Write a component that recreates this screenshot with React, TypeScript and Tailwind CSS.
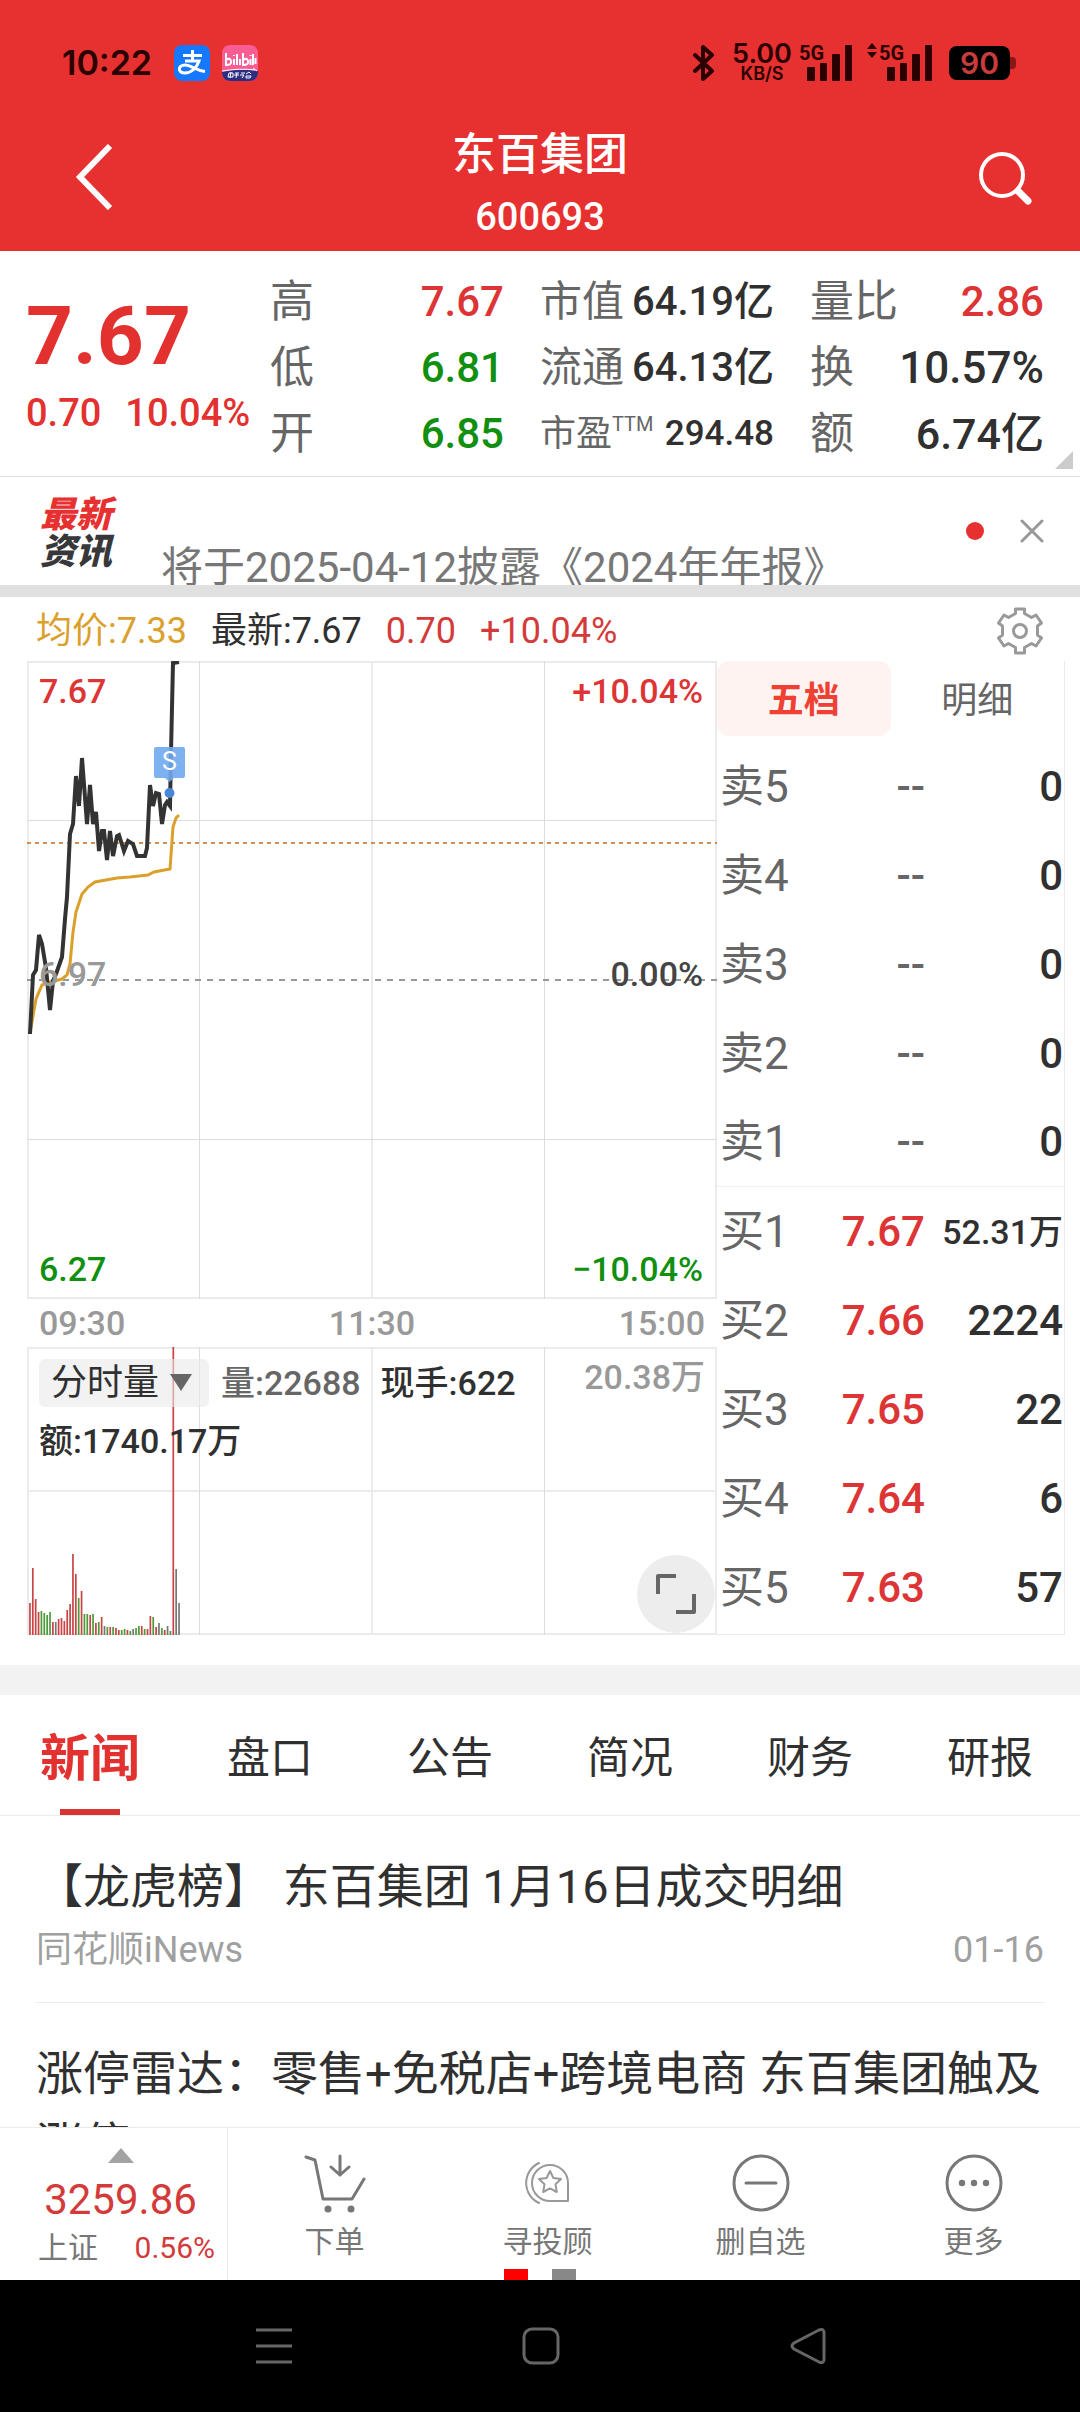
import type { ReactNode } from 'react'

type Tone = 'up' | 'down' | 'flat'

const toneText: Record<Tone, string> = {
    up: 'text-[#dd3535]',
    down: 'text-[#108f10]',
    flat: 'text-[#303030]',
}

const quotes: { label: string; sup?: string; value: string; tone: Tone; size: string; labelSize: string }[] = [
    { label: '高', value: '7.67', tone: 'up', size: 'text-[42px]', labelSize: 'text-[44px]' },
    { label: '市值', value: '64.19亿', tone: 'flat', size: 'text-[40px]', labelSize: 'text-[42px]' },
    { label: '量比', value: '2.86', tone: 'up', size: 'text-[42px]', labelSize: 'text-[44px]' },
    { label: '低', value: '6.81', tone: 'down', size: 'text-[42px]', labelSize: 'text-[44px]' },
    { label: '流通', value: '64.13亿', tone: 'flat', size: 'text-[40px]', labelSize: 'text-[42px]' },
    { label: '换', value: '10.57%', tone: 'flat', size: 'text-[44px]', labelSize: 'text-[44px]' },
    { label: '开', value: '6.85', tone: 'down', size: 'text-[42px]', labelSize: 'text-[44px]' },
    { label: '市盈', sup: 'TTM', value: '294.48', tone: 'flat', size: 'text-[35px]', labelSize: 'text-[36px]' },
    { label: '额', value: '6.74亿', tone: 'flat', size: 'text-[43px]', labelSize: 'text-[44px]' },
]

const sells = ['卖5', '卖4', '卖3', '卖2', '卖1']

const buys = [
    { label: '买1', price: '7.67', amount: '52.31万', size: 'text-[34px]' },
    { label: '买2', price: '7.66', amount: '2224', size: 'text-[42px]' },
    { label: '买3', price: '7.65', amount: '22', size: 'text-[42px]' },
    { label: '买4', price: '7.64', amount: '6', size: 'text-[42px]' },
    { label: '买5', price: '7.63', amount: '57', size: 'text-[42px]' },
]

const tabs = ['新闻', '盘口', '公告', '简况', '财务', '研报']

const pricePoints =
    '30,1034 33,975 36,970 39,935 42,944 46,968 50,1010 53,981 56,974 62,957 65,919 67,897 70,834 73,824 76,776 79,806 82,758 87,824 90,785 93,824 96,812 99,851 102,831 104,831 107,860 110,831 113,856 117,836 119,835 124,851 128,841 133,844 137,856 145,856 147,848 150,785 153,806 156,793 159,794 162,824 165,805 167,802 170,806 171,752 173,663 179,662'

const averagePoints =
    '30,1033 36,999 42,985 50,982 62,979 67,975 70,964 73,932 76,912 82,894 88,887 95,882 117,878 130,877 148,875 154,872 170,869 173,827 176,818 179,815'

// height and colour of each minute's volume
const volumes: [number, string][] = [
    [32, 'r'], [67, 'r'], [36, 'r'], [23, 'r'], [24, 'g'], [22, 'g'], [20, 'g'], [23, 'g'], [13, 'r'], [13, 'k'],
    [16, 'r'], [17, 'r'], [14, 'r'], [25, 'r'], [31, 'r'], [81, 'r'], [61, 'r'], [37, 'g'], [44, 'r'], [21, 'g'],
    [21, 'g'], [20, 'r'], [21, 'g'], [12, 'r'], [13, 'g'], [18, 'r'], [9, 'k'], [8, 'g'], [8, 'r'], [8, 'g'],
    [7, 'r'], [5, 'r'], [5, 'g'], [6, 'g'], [5, 'r'], [4, 'g'], [6, 'k'], [7, 'g'], [9, 'g'], [9, 'r'],
    [6, 'g'], [6, 'r'], [19, 'r'], [18, 'g'], [8, 'r'], [12, 'k'], [7, 'g'], [5, 'r'], [9, 'k'], [4, 'g'],
    [288, 'r'], [66, 'k'], [32, 'k'],
]

const volumeFill: Record<string, string> = { r: '#c94444', g: '#4d9a3a', k: '#777777' }

function SignalBars() {
    return (
        <svg width="46" height="36" viewBox="0 0 46 36" fill="currentColor" aria-hidden="true">
            <rect x="0" y="22" width="8" height="14" rx="1" />
            <rect x="13" y="18" width="7" height="18" rx="1" />
            <rect x="25" y="9" width="8" height="27" rx="1" />
            <rect x="38" y="0" width="7" height="36" rx="1" />
        </svg>
    )
}

function StatusBar() {
    return (
        <div className="flex h-[82px] items-center justify-between pt-11 pr-16 pl-[62px] text-[#2a0000]">
            <div className="flex items-center">
                <span className="w-28 font-['Inter',sans-serif] text-[34px] leading-9 font-semibold">10:22</span>
                <span className="flex size-9 items-center justify-center rounded-lg bg-[#1677ff]">
                    <svg width="28" height="26" viewBox="0 0 28 26" fill="none" stroke="#fff" strokeWidth="3" aria-hidden="true">
                        <path d="M5 5.500h19M14.500 0v11M7 11h14c-2 6-7 12-14 12-8 0-7-8 0-8 6 0 10 5 20 6.500" />
                    </svg>
                </span>
                <span className="ml-3 flex size-9 flex-col overflow-hidden rounded-lg bg-[#fb5c92]">
                    <svg width="36" height="36" viewBox="0 0 36 36" aria-hidden="true">
                        <path d="M0 27q18-4 36-1v10H0z" fill="#2d2f83" />
                        <path d="M0 26q18-3 33-1M31 23l4 3" stroke="#fff" fill="none" />
                        <g fill="none" stroke="#fff" strokeWidth="2">
                            <path d="M4 8v12q6 0 5-4t-5-1M12 14v6M12 10v1M15 9v11M18 14v6M21 8v12q6 0 5-4t-5-1M28.500 14v6M28.500 10v1M31 9v11M33.500 13v6" />
                        </g>
                        <path d="M7 28h4v4h-5zM9 27l-1 6M13 28h4M12 30h5M15 28l-1 5M19 28h4M18 30h4l-2 3M24 29l3-2 2 2M24 31h5l-1 2h-4z" stroke="#fff" fill="none" />
                    </svg>
                </span>
            </div>
            <div className="flex items-center">
                <svg width="22" height="36" viewBox="0 0 22 36" fill="none" stroke="currentColor" strokeWidth="4" strokeLinejoin="round" strokeLinecap="round" aria-hidden="true">
                    <path d="M2 10l17 16-9 8V2l9 8L2 26" />
                </svg>
                <span className="ml-4 flex w-[62px] flex-col items-center font-['Inter',sans-serif] font-semibold">
                    <span className="text-[27px] leading-[22px]">5.00</span>
                    <span className="text-[18px] leading-[18px]">KB/S</span>
                </span>
                <span className="relative ml-3.5">
                    <SignalBars />
                    <span className="absolute -top-1 -left-2 text-[20px] leading-6 font-bold">5G</span>
                </span>
                <svg width="10" height="16" viewBox="0 0 10 16" fill="currentColor" className="mr-2.5 ml-3.5 self-start" aria-hidden="true">
                    <path d="M5 0l5 6H0zM5 15l5-6H0z" />
                </svg>
                <span className="relative">
                    <SignalBars />
                    <span className="absolute -top-1 -left-2 text-[20px] leading-6 font-bold">5G</span>
                </span>
                <span className="ml-4 flex h-[34px] w-[61px] items-center justify-center rounded-lg bg-black font-['Inter',sans-serif] text-[30px] leading-8 font-semibold text-[#c83c3c]">
                    90
                </span>
                <span className="h-3 w-1.5 rounded-r bg-[#8a1616]" />
            </div>
        </div>
    )
}

function Header() {
    return (
        <header className="bg-[#e73030]">
            <StatusBar />
            <div className="flex pt-[42px] pb-[3px] text-white">
                <div className="flex-1">
                    <button type="button" aria-label="返回" className="flex h-[105px] items-center pl-[74px]">
                        <svg width="40" height="66" viewBox="0 0 40 66" fill="none" stroke="currentColor" strokeWidth="6">
                            <path d="M36 2L6 33l30 31" />
                        </svg>
                    </button>
                </div>
                <div className="text-center font-medium">
                    <h1 className="text-[44px] leading-[62px]">东百集团</h1>
                    <p className="text-[38px] leading-[62px]">600693</p>
                </div>
                <div className="flex flex-1 justify-end">
                    <button type="button" aria-label="搜索" className="flex h-[108px] items-center pr-12">
                        <svg width="54" height="54" viewBox="0 0 54 54" fill="none" stroke="currentColor" strokeLinecap="round">
                            <circle cx="24" cy="24" r="21" strokeWidth="4" />
                            <path d="M40 40l10 10" strokeWidth="7" />
                        </svg>
                    </button>
                </div>
            </div>
        </header>
    )
}

function QuotePanel() {
    return (
        <section className="relative flex border-b border-[#ddd] pt-[18px] pr-9 pb-[9px] pl-[26px]">
            <div className="w-[244px] shrink-0 pt-3 text-[#e3312f]">
                <p className="text-[82px] leading-[110px] font-bold">7.67</p>
                <p className="flex gap-6 text-[38px] leading-11 font-medium whitespace-nowrap">
                    <span>0.70</span>
                    <span>10.04%</span>
                </p>
            </div>
            <dl className="grid flex-1 grid-cols-3 gap-x-9">
                {quotes.map((q) => (
                    <div key={q.label} className="flex h-[66px] items-center justify-between leading-[66px] whitespace-nowrap">
                        <dt className={`flex text-[#666] ${q.labelSize}`}>
                            {q.label}
                            {q.sup && <span className="text-[20px] leading-[46px]">{q.sup}</span>}
                        </dt>
                        <dd className={`font-medium ${q.size} ${toneText[q.tone]}`}>{q.value}</dd>
                    </div>
                ))}
            </dl>
            <svg width="18" height="18" viewBox="0 0 18 18" className="absolute right-[7px] bottom-[7px]" aria-hidden="true">
                <path d="M18 0v18H0z" fill="#ccc" />
            </svg>
        </section>
    )
}

function Ticker() {
    return (
        <section className="flex h-[108px] justify-between overflow-hidden pr-9 pl-10">
            <div className="flex">
                <p className="w-[121px] pt-5 text-[36px] leading-[37px] font-black text-[#38383a] italic">
                    <span className="block text-[#e73030]">最新</span>
                    资讯
                </p>
                <a href="#notice" className="pt-[70px] text-[42px] leading-[42px] whitespace-nowrap text-[#777]">
                    将于2025-04-12披露《2024年年报》
                </a>
            </div>
            <div className="flex items-center gap-9">
                <span className="size-[18px] rounded-full bg-[#e73030]" />
                <button type="button" aria-label="关闭">
                    <svg width="24" height="24" viewBox="0 0 24 24" stroke="#999" strokeWidth="3" strokeLinecap="round">
                        <path d="M2 2l20 20M22 2L2 22" />
                    </svg>
                </button>
            </div>
        </section>
    )
}

function ChartSummary() {
    return (
        <div className="flex h-16 items-center justify-between px-9 pt-1 text-[36px] leading-10">
            <div className="flex gap-6 text-[#d33b3b]">
                <span className="text-[#dba02c]">均价:7.33</span>
                <span className="text-[#303030]">最新:7.67</span>
                <span>0.70</span>
                <span>+10.04%</span>
            </div>
            <button type="button" aria-label="设置">
                <svg width="48" height="48" viewBox="0 0 48 48" fill="none" stroke="#999" strokeWidth="3" strokeLinejoin="round">
                    <path d="M19.500 2h9v4.500l7 4 4.500-2.500 5.500 8-4 3v9l4 3-5.500 8-4.500-2.500-7 4V46h-9v-5.500l-7-4L8 39l-5.500-8 4-3v-9l-4-3L8 8l4.500 2.500 7-4z" />
                    <circle cx="24" cy="24" r="6.500" />
                </svg>
            </button>
        </div>
    )
}

function PriceChart() {
    return (
        <div className="relative h-[638px] text-[34px] leading-10 font-medium">
            <svg className="block size-full" viewBox="27 661 690 638" preserveAspectRatio="none" aria-hidden="true">
                <g stroke="#ebebeb" strokeWidth="2" fill="none">
                    <path d="M28 662h688v636H28zM372 662v636" />
                </g>
                <path d="M199.500 661v638M544.500 661v638M28 820.500h688M28 1139.500h688" stroke="#dcdcdc" />
                <path d="M27 843h690" stroke="#cf8f50" strokeWidth="2" strokeDasharray="4 4" />
                <path d="M27 980h690" stroke="#999" strokeWidth="2" strokeDasharray="6 6" />
                <polyline points={averagePoints} fill="none" stroke="#dba02c" strokeWidth="3" />
                <polyline points={pricePoints} fill="none" stroke="#333" strokeWidth="4" />
                <path d="M156 747h27q2 0 2 2v27q0 2-2 2h-9l-4.500 4-4.500-4h-9q-2 0-2-2v-27q0-2 2-2z" fill="#6fa8ee" fillOpacity="0.9" />
                <circle cx="169.500" cy="793" r="5" fill="#4a86d8" />
                <text x="169.500" y="770" textAnchor="middle" fontSize="25" fontWeight="400" fill="#fff">S</text>
            </svg>
            <span className="absolute top-2.5 left-3 text-[#dd3535]">7.67</span>
            <span className="absolute top-[293px] left-3 text-[#999]">6.97</span>
            <span className="absolute bottom-2.5 left-3 text-[#108f10]">6.27</span>
            <span className="absolute top-2.5 right-3.5 text-[#dd3535]">+10.04%</span>
            <span className="absolute top-[293px] right-3.5 text-[#444]">0.00%</span>
            <span className="absolute right-3.5 bottom-2.5 text-[#108f10]">−10.04%</span>
        </div>
    )
}

function VolumeChart() {
    return (
        <div className="relative h-72 text-[34px] leading-10 font-medium">
            <svg className="block size-full" viewBox="27 1347 690 288" preserveAspectRatio="none" aria-hidden="true">
                <path d="M28 1348h688v286H28zM372 1348v286M28 1491h688" stroke="#ebebeb" strokeWidth="2" fill="none" />
                <path d="M199.500 1347v288M544.500 1347v288" stroke="#dcdcdc" />
                {volumes.map(([height, kind], i) => (
                    <rect key={i} x={29.1 + i * 2.867} y={1635 - height} width="1.700" height={height} fill={volumeFill[kind]} />
                ))}
            </svg>
            <div className="absolute top-3 right-3 left-3 text-[#303030]">
                <div className="flex items-center whitespace-nowrap">
                    <button type="button" className="flex h-12 w-[170px] items-center justify-between rounded-md bg-[#eaeaea]/60 pr-4 pl-3 text-[36px]">
                        <span className="font-normal">分时量</span>
                        <svg width="24" height="18" viewBox="0 0 24 18" aria-hidden="true">
                            <path d="M1 0h22L12 17z" fill="#666" />
                        </svg>
                    </button>
                    <span className="ml-3 text-[#666]">量:22688</span>
                    <span className="ml-5">现手:622</span>
                    <span className="-mt-3 ml-auto text-[#999]">20.38万</span>
                </div>
                <p className="mt-3.5">额:1740.17万</p>
            </div>
            <button type="button" aria-label="全屏" className="absolute right-0.5 bottom-0.5 flex size-[78px] items-center justify-center rounded-full bg-[#ededed]">
                <svg width="42" height="42" viewBox="0 0 42 42" fill="none" stroke="#666" strokeWidth="4" strokeLinejoin="round">
                    <path d="M3 21V3h18M39 21v18H21" />
                </svg>
            </button>
        </div>
    )
}

function OrderRow({ label, price, amount, size, priceClass }: { label: string; price: string; amount: string; size: string; priceClass: string }) {
    return (
        <tr className="h-[89px]">
            <th scope="row" className="w-[103px] pt-0.5 pl-[3px] text-left text-[44px] font-normal text-[#666]">{label}</th>
            <td className={`w-[105px] pt-0.5 text-right text-[42px] font-medium ${priceClass}`}>{price}</td>
            <td className={`pt-0.5 pr-px text-right font-medium text-[#303030] ${size}`}>{amount}</td>
        </tr>
    )
}

function OrderBook() {
    return (
        <div className="w-[348px] shrink-0 border-r border-b border-[#ebebeb]">
            <div role="tablist" className="grid h-20 grid-cols-2 items-start text-[36px]">
                <button type="button" role="tab" aria-selected="true" className="h-[75px] rounded-xl bg-[#fff3f2] pt-1 font-bold text-[#f04034]">五档</button>
                <button type="button" role="tab" aria-selected="false" className="h-[75px] pt-1 text-[#666]">明细</button>
            </div>
            <table className="w-full border-collapse leading-[60px]">
                <tbody>
                    {sells.map((label) => (
                        <OrderRow key={label} label={label} price="--" amount="0" size="text-[42px]" priceClass="text-[#666]" />
                    ))}
                </tbody>
                <tbody className="border-t border-[#f0f0f0]">
                    {buys.map((row) => (
                        <OrderRow key={row.label} {...row} priceClass="text-[#dd3535]" />
                    ))}
                </tbody>
            </table>
        </div>
    )
}

function ChartSection() {
    return (
        <section>
            <ChartSummary />
            <div className="flex pr-[15px] pl-[27px]">
                <div className="min-w-0 flex-1">
                    <PriceChart />
                    <div className="flex h-12 items-center justify-between px-3 text-[34px] font-medium text-[#999]">
                        <span>09:30</span>
                        <span>11:30</span>
                        <span>15:00</span>
                    </div>
                    <VolumeChart />
                </div>
                <OrderBook />
            </div>
        </section>
    )
}

function NewsSection() {
    return (
        <section>
            <nav className="grid h-[121px] grid-cols-6 border-b border-[#ebebeb]">
                {tabs.map((tab, i) => (
                    <a
                        key={tab}
                        href="#news"
                        className={
                            i === 0
                                ? 'flex flex-col items-center justify-between pt-8 text-[50px] leading-[64px] font-bold text-[#e3312f]'
                                : 'flex flex-col items-center pt-8 text-[43px] leading-[62px] text-[#303030]'
                        }
                    >
                        {tab}
                        {i === 0 && <span className="h-1.5 w-[60px] bg-[#d93434]" />}
                    </a>
                ))}
            </nav>
            <div className="h-[311px] overflow-hidden px-9">
                <article className="h-[187px] border-b border-[#ebebeb] pt-[35px]">
                    <h2 className="text-[47px] leading-[71px] text-[#303030]">【龙虎榜】 东百集团 1月16日成交明细</h2>
                    <p className="flex justify-between text-[36px] leading-14 text-[#a0a0a0]">
                        <span>同花顺iNews</span>
                        <time>01-16</time>
                    </p>
                </article>
                <article className="pt-[35px]">
                    <h2 className="text-[47px] leading-[71px] text-[#303030]">涨停雷达：零售+免税店+跨境电商 东百集团触及涨停</h2>
                </article>
            </div>
        </section>
    )
}

function ToolButton({ label, children }: { label: string; children: ReactNode }) {
    return (
        <button type="button" className="flex flex-1 flex-col items-center pt-6 text-[30px] leading-10 text-[#777]">
            <svg width="62" height="62" viewBox="0 0 62 62" fill="none" stroke="currentColor" strokeWidth="3" strokeLinecap="round" strokeLinejoin="round">
                {children}
            </svg>
            <span className="mt-2">{label}</span>
        </button>
    )
}

function BottomBar() {
    return (
        <footer className="relative flex h-[153px] border-t border-[#ebebeb] bg-white">
            <div className="flex w-[228px] flex-col items-center border-r border-[#ebebeb] pt-5">
                <svg width="26" height="15" viewBox="0 0 26 15" className="ml-3.5" aria-hidden="true">
                    <path d="M13 0l13 15H0z" fill="#a3a3a3" />
                </svg>
                <span className="mt-3 pl-3.5 text-[42px] leading-[50px] text-[#d33b3b]">3259.86</span>
                <p className="flex w-full justify-between pr-3 pl-[38px] text-[30px] leading-[46px]">
                    <span className="text-[#777]">上证</span>
                    <span className="text-[#d33b3b]">0.56%</span>
                </p>
            </div>
            <ToolButton label="下单">
                <path d="M2 5l9 3 8 39h29l12-20M36 4v19M27 15l9 8 9-8" />
                <g fill="currentColor" stroke="none">
                    <circle cx="24" cy="57" r="3.500" />
                    <circle cx="47" cy="57" r="3.500" />
                </g>
            </ToolButton>
            <ToolButton label="寻投顾">
                <g strokeWidth="2" stroke="#999">
                    <path d="M51 49V31a18 18 0 1 0-18 18z" />
                    <path d="M22 11a22 22 0 0 0 0 40" />
                    <path d="M33 19l3.400 7 7.600 1-5.500 5.300 1.300 7.700L33 36.400 26.200 40l1.300-7.700L22 27l7.600-1z" />
                </g>
            </ToolButton>
            <ToolButton label="删自选">
                <circle cx="31" cy="31" r="27" />
                <path d="M16 31h30" />
            </ToolButton>
            <ToolButton label="更多">
                <circle cx="31" cy="31" r="27" />
                <g fill="currentColor" stroke="none">
                    <circle cx="19" cy="31" r="3.200" />
                    <circle cx="31" cy="31" r="3.200" />
                    <circle cx="43" cy="31" r="3.200" />
                </g>
            </ToolButton>
            <div className="absolute inset-x-0 bottom-0 flex justify-center gap-6">
                <span className="h-[11px] w-6 bg-[#f00]" />
                <span className="h-[11px] w-6 bg-[#888]" />
            </div>
        </footer>
    )
}

function SystemNav() {
    return (
        <div className="flex h-[132px] items-center justify-center gap-[230px] bg-black pl-0.5 text-[#666]">
            <button type="button" aria-label="最近任务">
                <svg width="36" height="38" viewBox="0 0 36 38" stroke="currentColor" strokeWidth="3">
                    <path d="M0 3h36M0 19h36M0 35h36" />
                </svg>
            </button>
            <button type="button" aria-label="主屏幕">
                <svg width="38" height="38" viewBox="0 0 38 38" fill="none" stroke="currentColor" strokeWidth="3">
                    <rect x="2" y="2" width="34" height="34" rx="8" />
                </svg>
            </button>
            <button type="button" aria-label="返回上一页">
                <svg width="36" height="38" viewBox="0 0 36 38" fill="none" stroke="currentColor" strokeWidth="3">
                    <path d="M29 3q5-2 5 3v26q0 5-5 3L4 22q-4-3 0-6z" />
                </svg>
            </button>
        </div>
    )
}

export default function App() {
    return (
        <main lang="zh-CN" className="min-h-screen bg-white font-['Roboto','Noto_Sans_CJK_SC',sans-serif]">
            <Header />
            <QuotePanel />
            <Ticker />
            <div className="h-3 bg-[#e0e0e0]" />
            <ChartSection />
            <div className="mt-[30px] h-[30px] bg-[#f2f2f2]" />
            <NewsSection />
            <BottomBar />
            <SystemNav />
        </main>
    )
}
